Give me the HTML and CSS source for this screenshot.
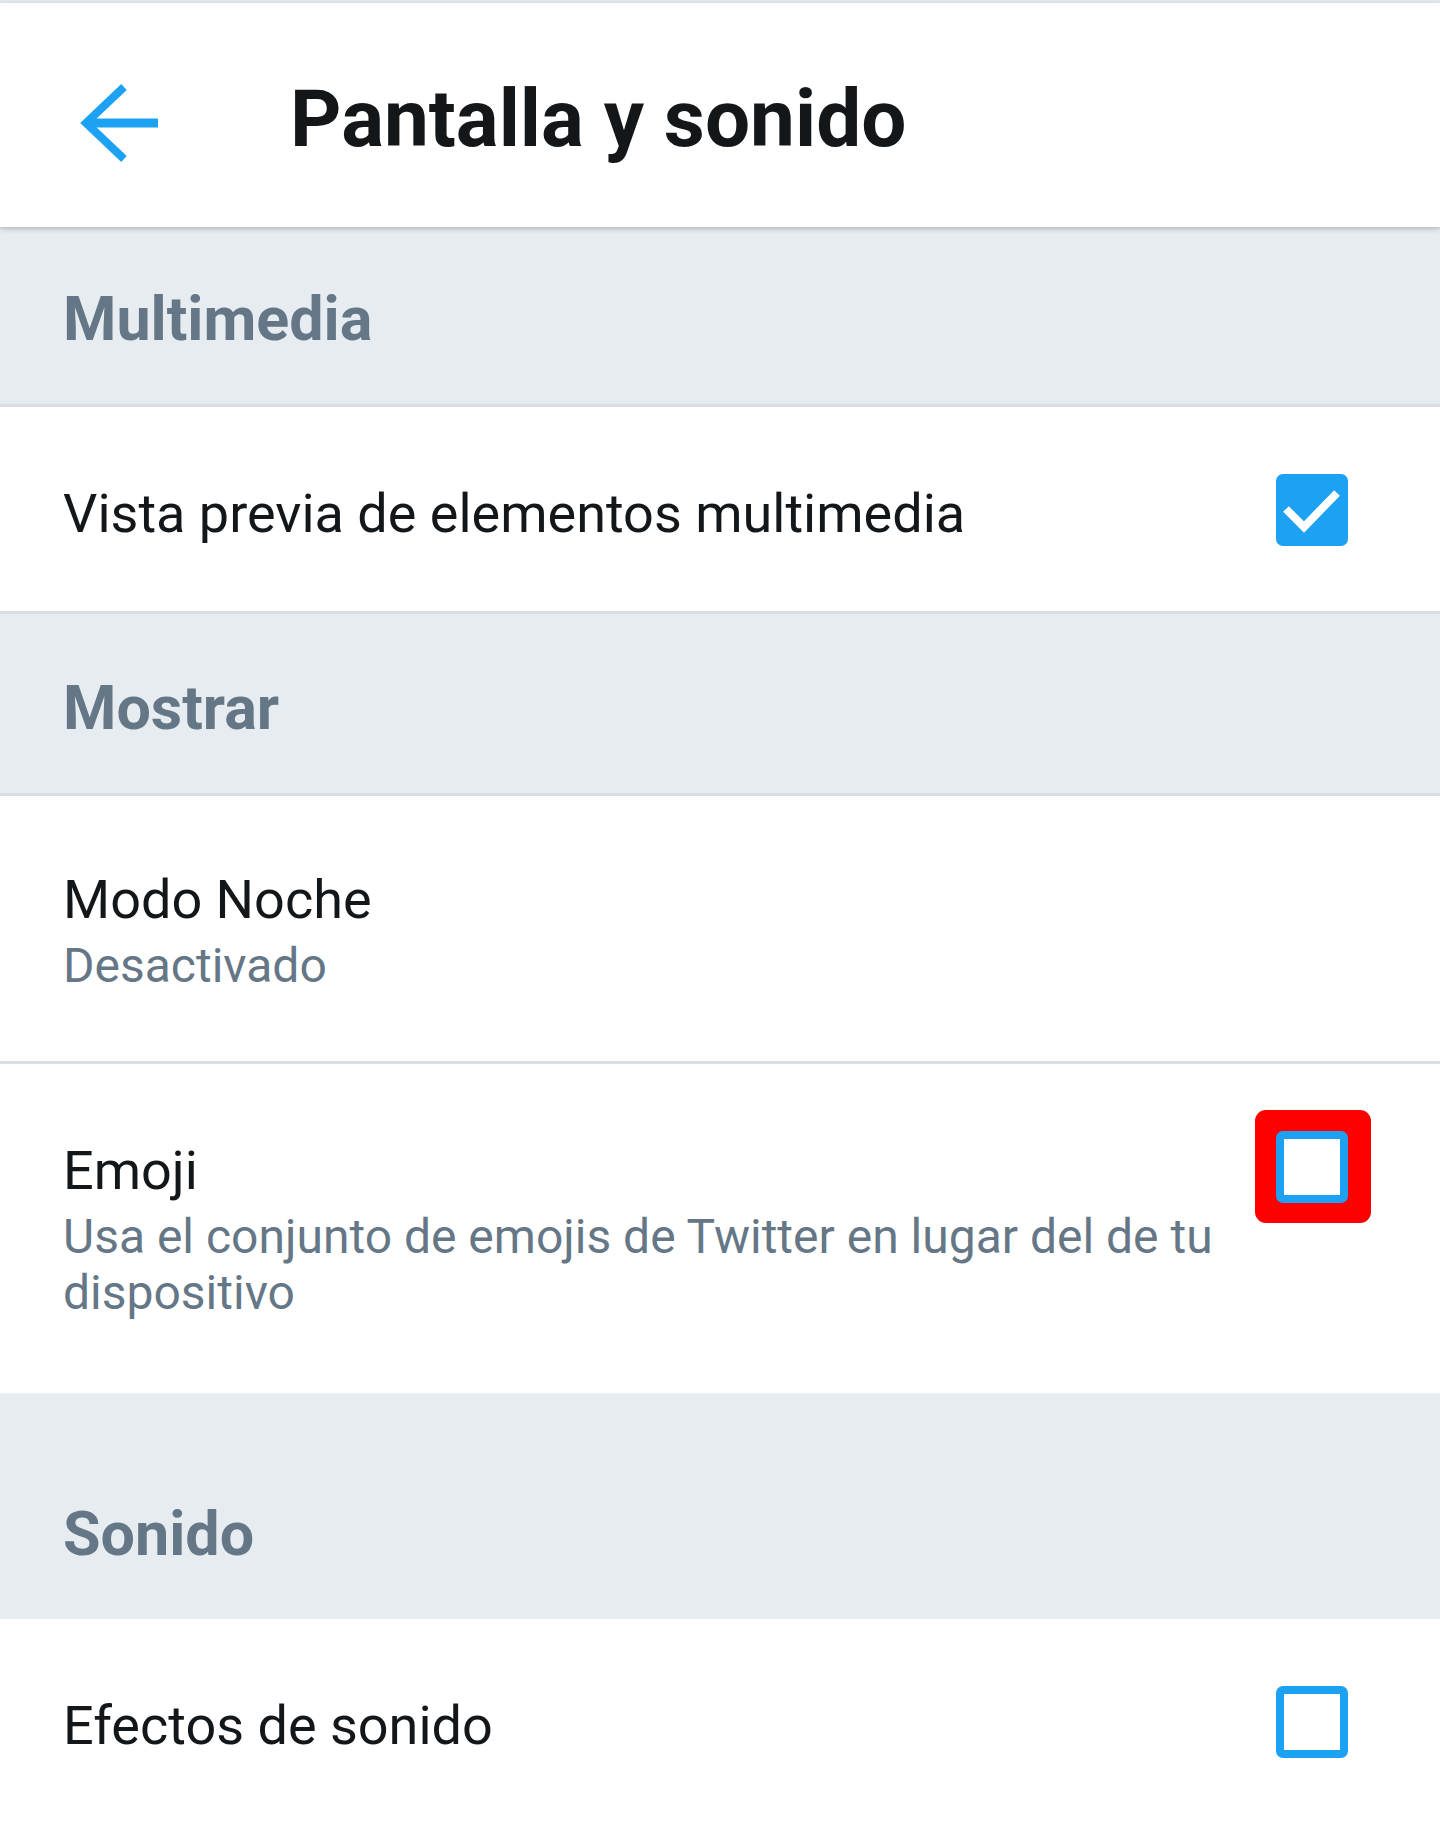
FILE: index.html
```html
<!DOCTYPE html>
<html lang="es">
<head>
<meta charset="utf-8">
<title>Pantalla y sonido</title>
<link rel="stylesheet" href="styles.css">
</head>
<body>
<div class="statusline"></div>
<header class="appbar">
  <svg class="back" viewBox="0 0 80 80" width="80" height="80" aria-hidden="true">
    <path d="M44 4 L6 40 L44 76" fill="none" stroke="#1da1f2" stroke-width="8" stroke-linejoin="miter"/>
    <path d="M6 40 H78" fill="none" stroke="#1da1f2" stroke-width="9"/>
  </svg>
  <h1 class="title">Pantalla y sonido</h1>
</header>

<div class="group group-first">Multimedia</div>
<div class="row row-single row-preview">
  <div class="row-text"><div class="label">Vista previa de elementos multimedia</div></div>
  <span class="cb cb-on">
    <svg viewBox="0 0 72 72" width="72" height="72" aria-hidden="true"><path d="M10 35 L28 53 L61 19" fill="none" stroke="#fff" stroke-width="8"/></svg>
  </span>
</div>

<div class="group group-mid">Mostrar</div>
<div class="row row-double">
  <div class="row-text">
    <div class="label">Modo Noche</div>
    <div class="sub">Desactivado</div>
  </div>
</div>
<div class="row row-double row-top row-last">
  <div class="row-text">
    <div class="label">Emoji</div>
    <div class="sub">Usa el conjunto de emojis de Twitter en lugar del de tu dispositivo</div>
  </div>
  <span class="mark"><span class="cb cb-off"></span></span>
</div>

<div class="group group-tall">Sonido</div>
<div class="row row-single row-plain">
  <div class="row-text"><div class="label">Efectos de sonido</div></div>
  <span class="cb cb-off"></span>
</div>
</body>
</html>
```

FILE: styles.css
```css
* { box-sizing: border-box; }
html, body { margin: 0; padding: 0; }
body {
  width: 1440px;
  height: 1824px;
  overflow: hidden;
  background: #ffffff;
  font-family: Roboto, "Noto Sans", "Liberation Sans", sans-serif;
  color: #14171a;
}
.statusline {
  height: 3px;
  background: #e6e9ec;
}
.appbar {
  position: relative;
  z-index: 2;
  height: 224px;
  display: flex;
  align-items: center;
  padding-left: 80px;
  background: #fff;
  box-shadow: 0 2px 5px rgba(0, 0, 0, 0.22);
}
.back { flex: none; margin-top: 16px; }
.title {
  margin: 8px 0 0 130px;
  font-size: 80px;
  font-weight: 700;
  line-height: 80px;
  color: #14171a;
}
.group {
  background: #e6ecf0;
  padding: 55px 63px 48px;
  font-size: 61px;
  font-weight: 700;
  line-height: 74px;
  color: #657786;
  border-bottom: 3px solid #dadee2;
}
.group-mid { padding-top: 57px; padding-bottom: 48px; }
.group-tall { padding-top: 103px; padding-bottom: 48px; border-bottom: none; }
.row {
  display: flex;
  align-items: center;
  padding: 67px 92px 62px 63px;
  border-bottom: 3px solid #dadee2;
  background: #fff;
}
.row-preview { padding-bottom: 65px; }
.row-single .label { padding-top: 7px; }
.row-double { padding-top: 72px; padding-bottom: 67px; }
.row-top { align-items: flex-start; padding-top: 75px; padding-bottom: 72px; }
.row-last { border-bottom: 1px solid #eef2f5; }
.row-plain { border-bottom: none; }
.row-text { flex: 1; min-width: 0; }
.label {
  font-size: 54px;
  line-height: 64px;
}
.sub {
  margin-top: 6px;
  font-size: 48px;
  line-height: 56px;
  color: #657786;
}
.cb {
  flex: none;
  width: 72px;
  height: 72px;
  border-radius: 7px;
  display: block;
}
.cb svg { display: block; }
.cb-on { background: #1da1f2; }
.cb-off { border: 8px solid #1da1f2; background: #fff; }
.mark {
  flex: none;
  display: block;
  margin: -29px -23px 0 12px;
  padding: 21px 23px 20px 21px;
  background: #ff0000;
  border-radius: 11px;
}
```
